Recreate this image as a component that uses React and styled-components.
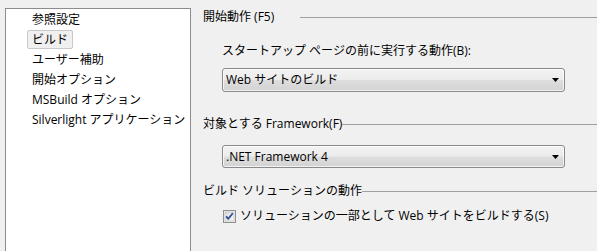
import React from "react";
import styled, { createGlobalStyle } from "styled-components";

const GlobalStyle = createGlobalStyle`
  html, body {
    margin: 0;
    padding: 0;
    background: #f0f0f0;
  }
  body {
    font-family: "Open Sans", "Noto Sans CJK JP", sans-serif;
    font-size: 12px;
    color: #000;
  }
`;

const Page = styled.div`
  display: flex;
  width: 597px;
  height: 251px;
  overflow: hidden;
  background: #f0f0f0;
`;

const Sidebar = styled.nav`
  box-sizing: border-box;
  flex: 0 0 186px;
  height: 270px;
  margin: 8px 0 0 5px;
  background: #fff;
  border: 1px solid #8c8c8c;
  overflow: hidden;
`;

const NavList = styled.ul`
  list-style: none;
  margin: 0;
  padding: 1px 0 0 21px;
`;

const NavRow = styled.li`
  height: 20px;
  white-space: nowrap;
`;

const NavItem = styled.span`
  display: inline-block;
  box-sizing: border-box;
  height: 19px;
  line-height: 17px;
  padding: 0 4px;
  border: 1px solid ${(p) => (p.$active ? "#c9c9c9" : "transparent")};
  border-radius: 2px;
  background: ${(p) => (p.$active ? "#f0f0f0" : "transparent")};
`;

const Content = styled.main`
  flex: 1;
  padding: 8px 0 0 12px;
`;

const SectionHeader = styled.div`
  display: flex;
  align-items: center;
  height: 18px;
  line-height: 18px;
  margin-top: ${(p) => p.$top || 0}px;
  white-space: nowrap;

  &::after {
    content: "";
    flex: 1;
    height: 1px;
    margin-left: ${(p) => p.$gap || 0}px;
    background: #a0a0a0;
  }
`;

const Label = styled.div`
  height: 18px;
  line-height: 18px;
  margin: 16px 0 0 19px;
`;

const Select = styled.div`
  box-sizing: border-box;
  display: flex;
  align-items: center;
  justify-content: space-between;
  width: 343px;
  height: ${(p) => p.$height}px;
  margin: ${(p) => p.$top}px 0 0 19px;
  padding: 0 5px 0 3px;
  border: 1px solid #8a8a8a;
  border-radius: 3px;
  background: linear-gradient(
    to bottom,
    #f3f3f3 0%,
    #ececec 48%,
    #dedede 52%,
    #d2d2d2 100%
  );
  box-shadow: inset 0 0 0 1px rgba(255, 255, 255, 0.7);
`;

const SelectText = styled.span`
  line-height: 18px;
`;

const Arrow = () => (
  <svg width="7" height="4" viewBox="0 0 7 4">
    <path d="M0 0h7L3.5 4z" fill="#000" />
  </svg>
);

const CheckRow = styled.label`
  display: flex;
  align-items: center;
  gap: 4px;
  height: 18px;
  line-height: 18px;
  margin: 7px 0 0 20px;
  white-space: nowrap;
`;

const CheckBox = () => (
  <svg width="13" height="13" viewBox="0 0 13 13">
    <defs>
      <linearGradient id="cb" x1="0" y1="0" x2="1" y2="1">
        <stop offset="0" stopColor="#dcdcdc" />
        <stop offset="1" stopColor="#f8f8f8" />
      </linearGradient>
    </defs>
    <rect x="0.5" y="0.5" width="12" height="12" fill="#f4f4f4" stroke="#8f8f8f" />
    <rect x="2" y="2" width="9" height="9" fill="url(#cb)" stroke="#b5b5b5" strokeWidth="0.6" />
    <path
      d="M3.2 6.4 L5.3 8.8 L9.8 3.2"
      fill="none"
      stroke="#2b4f92"
      strokeWidth="1.8"
      strokeLinejoin="round"
    />
  </svg>
);

const navItems = [
  "参照設定",
  "ビルド",
  "ユーザー補助",
  "開始オプション",
  "MSBuild オプション",
  "Silverlight アプリケーション",
];

export default function App() {
  return (
    <>
      <GlobalStyle />
      <Page>
        <Sidebar>
          <NavList>
            {navItems.map((item) => (
              <NavRow key={item}>
                <NavItem $active={item === "ビルド"}>{item}</NavItem>
              </NavRow>
            ))}
          </NavList>
        </Sidebar>
        <Content>
          <SectionHeader $gap={26}>開始動作 (F5)</SectionHeader>
          <Label>スタートアップ ページの前に実行する動作(B):</Label>
          <Select $top={8} $height={24}>
            <SelectText>Web サイトのビルド</SelectText>
            <Arrow />
          </Select>
          <SectionHeader $top={23}>対象とする Framework(F)</SectionHeader>
          <Select $top={12} $height={23}>
            <SelectText>.NET Framework 4</SelectText>
            <Arrow />
          </Select>
          <SectionHeader $top={14}>ビルド ソリューションの動作</SectionHeader>
          <CheckRow>
            <CheckBox />
            ソリューションの一部として Web サイトをビルドする(S)
          </CheckRow>
        </Content>
      </Page>
    </>
  );
}
